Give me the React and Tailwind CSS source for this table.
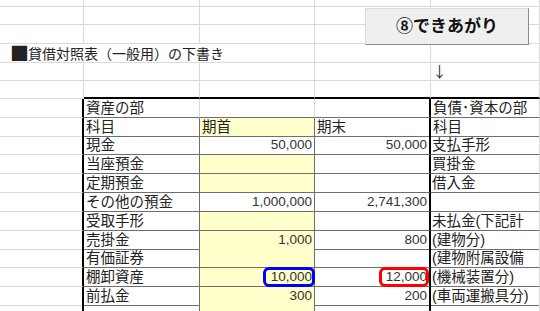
import clsx from "clsx";

const GRID = "grid grid-cols-[84px_116px_115px_116px_109px]";
const FONT = "font-['Liberation_Sans','Noto_Sans_CJK_JP',sans-serif]";
const CJK = "font-['Noto_Sans_CJK_JP',sans-serif]";

// border presets: g = sheet gridline, d = table rule, k = thick black
const RIGHT = {
  g: "border-r border-r-[#dadada]",
  d: "border-r border-r-[#6e6e6e]",
  k: "border-r-2 border-r-black",
  n: "",
};
const BOTTOM = {
  g: "border-b border-b-[#dadada]",
  d: "border-b border-b-[#6e6e6e]",
  k: "border-b-2 border-b-black",
  n: "",
};

function Cell({ r = "g", b = "g", className, children }) {
  return (
    <div
      className={clsx(
        "relative flex items-end whitespace-nowrap min-w-0",
        RIGHT[r],
        BOTTOM[b],
        className
      )}
    >
      {children}
    </div>
  );
}

const ASSETS = [
  { h: "h-[19px]", name: "現金", start: "50,000", end: "50,000", right: "支払手形", white: true },
  { h: "h-[19px]", name: "当座預金", right: "買掛金" },
  { h: "h-[19px]", name: "定期預金", right: "借入金" },
  { h: "h-[19px]", name: "その他の預金", start: "1,000,000", end: "2,741,300", white: true },
  { h: "h-[19px]", name: "受取手形", right: "未払金(下記計" },
  { h: "h-[18px]", name: "売掛金", start: "1,000", end: "800", right: "(建物分)" },
  { h: "h-[19px]", name: "有価証券", right: "(建物附属設備" },
  { h: "h-[19px]", name: "棚卸資産", start: "10,000", end: "12,000", right: "(機械装置分)", mark: true },
  { h: "h-[18px]", name: "前払金", start: "300", end: "200", right: "(車両運搬具分)" },
];

function BlankRow({ h }) {
  return (
    <div className={clsx(GRID, h)}>
      <Cell />
      <Cell />
      <Cell />
      <Cell />
      <Cell />
    </div>
  );
}

export default function App() {
  return (
    <div className={clsx("relative w-[540px] h-[311px] overflow-hidden bg-white text-[14.5px] leading-[18px] text-[#222]", FONT)}>
      <BlankRow h="h-[7px]" />
      <BlankRow h="h-[18px]" />
      <BlankRow h="h-[19px]" />

      {/* title row */}
      <div className={clsx(GRID, "h-[18px]")}>
        <Cell r="n" className={clsx("pl-[11px] text-[14px] overflow-visible z-10", CJK)}>
          <span className="text-[19px] leading-[18px] -ml-[1px] mr-[-1px]">■</span>
          貸借対照表（一般用）の下書き
        </Cell>
        <Cell r="n" />
        <Cell />
        <Cell />
        <Cell />
      </div>

      {/* arrow row */}
      <div className={clsx(GRID, "h-[18px]")}>
        <Cell />
        <Cell />
        <Cell />
        <Cell />
        <Cell className={clsx("pl-[1px] text-[15px] text-[#333]", CJK)}>↓</Cell>
      </div>

      <div className={clsx(GRID, "h-[19px]")}>
        <Cell />
        <Cell b="k" />
        <Cell b="k" />
        <Cell b="k" />
        <Cell b="k" />
      </div>

      {/* section headers */}
      <div className={clsx(GRID, "h-[19px]")}>
        <Cell r="k" />
        <Cell b="d" className="pl-[2px]">資産の部</Cell>
        <Cell b="d" />
        <Cell r="k" b="d" />
        <Cell b="d" className="pl-[2px] overflow-hidden">負債･資本の部</Cell>
      </div>

      <div className={clsx(GRID, "h-[18px]")}>
        <Cell r="k" />
        <Cell r="d" b="d" className="pl-[2px]">科目</Cell>
        <Cell r="d" b="d" className="pl-[2px] bg-[#ffffcc]">期首</Cell>
        <Cell r="k" b="d" className="pl-[2px]">期末</Cell>
        <Cell b="d" className="pl-[2px]">科目</Cell>
      </div>

      {ASSETS.map((a) => (
        <div key={a.name} className={clsx(GRID, a.h)}>
          <Cell r="k" />
          <Cell r="d" b="d" className="pl-[2px]">{a.name}</Cell>
          <Cell
            r="d"
            b="d"
            className={clsx("justify-end pr-[2px] text-[13.5px] text-[#333]", !a.white && "bg-[#ffffcc]")}
          >
            {a.start}
            {a.mark && (
              <span className="absolute left-[63px] right-[-1px] top-[-1px] bottom-[-1px] border-[3px] border-[#0000ff] rounded-[6px]" />
            )}
          </Cell>
          <Cell r="k" b="d" className="justify-end pr-[2px] text-[13.5px] text-[#333]">
            {a.end}
            {a.mark && (
              <span className="absolute left-[64px] right-[0px] top-[-1px] bottom-[-1px] border-[3px] border-[#ff0000] rounded-[6px]" />
            )}
          </Cell>
          <Cell b="d" className="pl-[1px] overflow-hidden">{a.right}</Cell>
        </div>
      ))}

      <div className={clsx(GRID, "h-[19px]")}>
        <Cell r="k" />
        <Cell r="d" b="d" />
        <Cell r="d" b="d" className="bg-[#ffffcc]" />
        <Cell r="k" b="d" />
        <Cell b="d" />
      </div>

      {/* macro button floating over the sheet */}
      <button className="absolute left-[365px] top-[8px] w-[164px] h-[37px] flex items-center justify-center bg-[#efefef] border border-t-[#dcdcdc] border-l-[#dcdcdc] border-r-[#8a8a8a] border-b-[#8a8a8a] text-[17px] font-bold text-[#111]">
        ⑧できあがり
      </button>
    </div>
  );
}
